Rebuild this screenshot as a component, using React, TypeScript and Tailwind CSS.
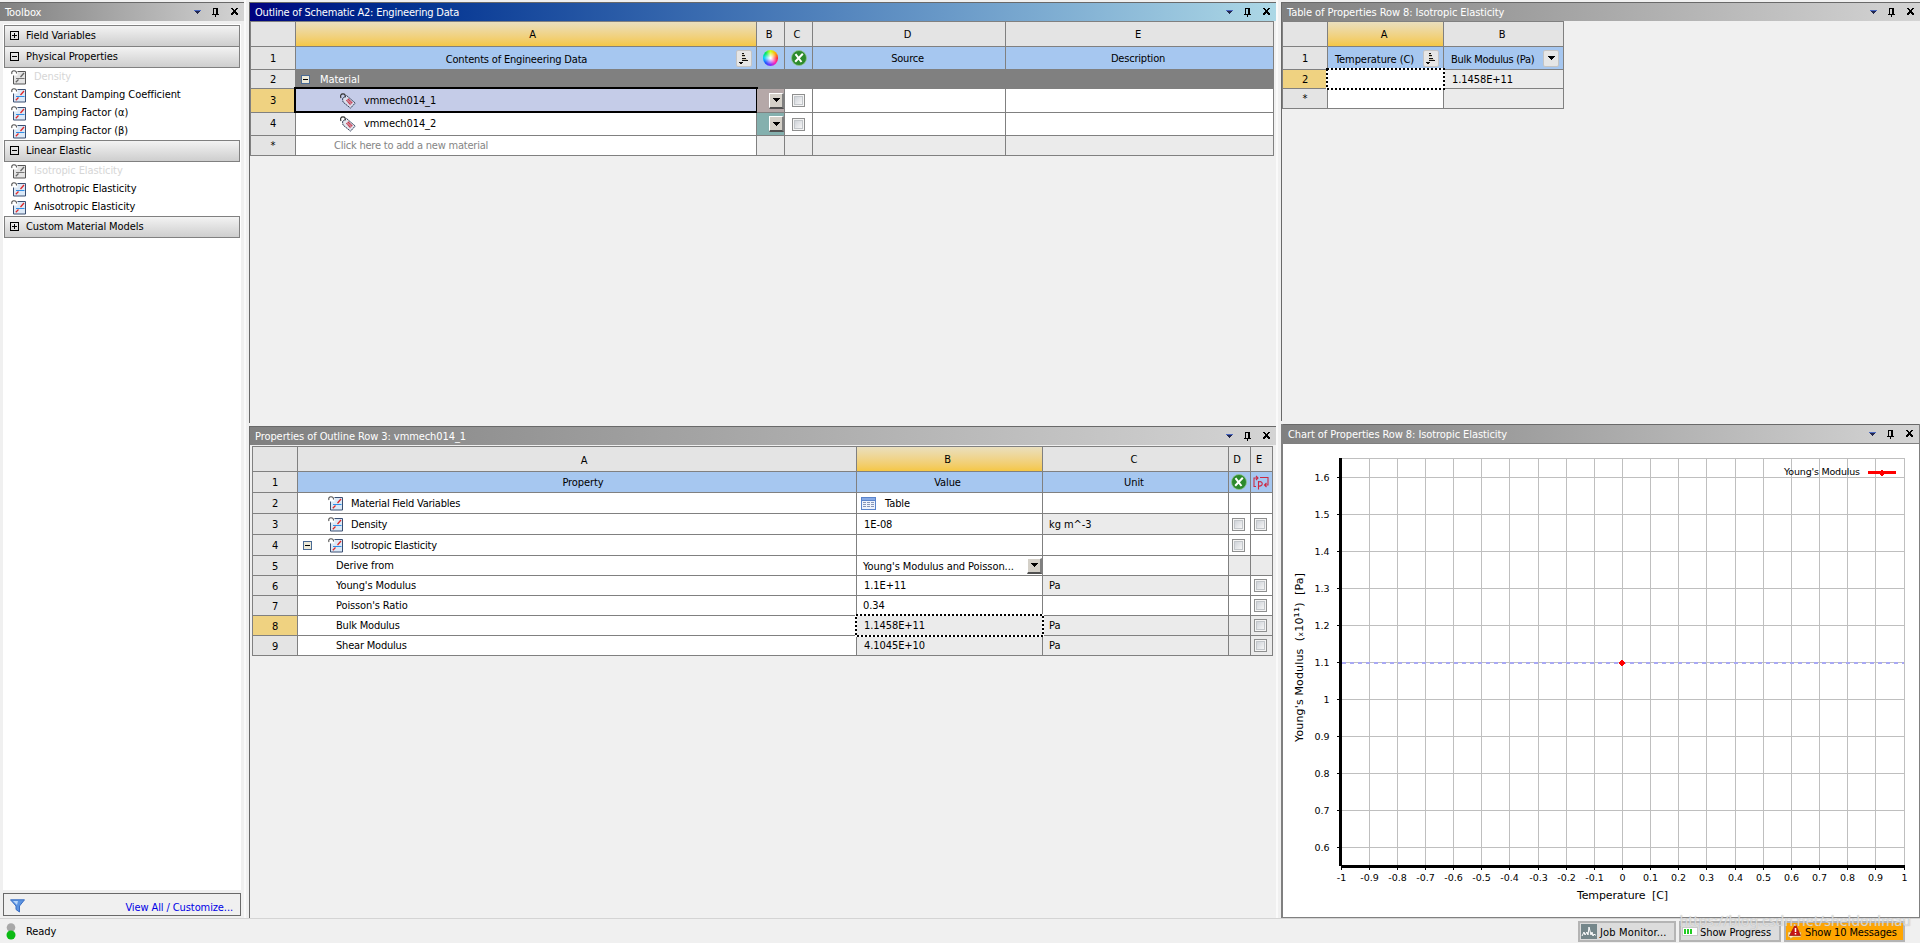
import type { ReactNode } from "react"
import clsx from "clsx"

const xTicks = [1341, 1369, 1397, 1425, 1453, 1481, 1509, 1538, 1566, 1594, 1622, 1650, 1678, 1706, 1735, 1763, 1791, 1819, 1847, 1875, 1904]
const xLabels = ["-1", "-0.9", "-0.8", "-0.7", "-0.6", "-0.5", "-0.4", "-0.3", "-0.2", "-0.1", "0", "0.1", "0.2", "0.3", "0.4", "0.5", "0.6", "0.7", "0.8", "0.9", "1"]
const yLabels = ["1.6", "1.5", "1.4", "1.3", "1.2", "1.1", "1", "0.9", "0.8", "0.7", "0.6"]

function TitleBar({ title, active, className }: { title: string; active?: boolean; className?: string }) {
  return (
    <div
      className={clsx(
        "flex h-[19px] shrink-0 items-center justify-between border-t border-[#696969] pl-[5px] text-white",
        active ? "bg-linear-to-r from-[#00007f] to-[#add8e6] tracking-[-0.2px]" : "bg-linear-to-r from-[#808080] to-[#d4d4d4] tracking-[-0.08px]",
        className,
      )}
    >
      <span className="pt-px">{title}</span>
      <svg className="h-[18px] w-[52px]" viewBox="0 0 52 18" shapeRendering="crispEdges">
        <path d="M2 7h7v1h-7z" fill="#4a68c0" />
        <path d="M3 8h5v1h-5zM4 9h3v1h-3zM5 10h1v1h-1z" fill="#23284f" />
        <path d="M21 5h5v6h1v1h-3v2h-1v-2h-3v-1h1zM22 6v5h2v-5z" fill="#000" fillRule="evenodd" />
        <path d="M39 5h2v1h1v1h1v-1h1v-1h2v1h-1v1h-1v2h1v1h1v2h-2v-1h-1v-1h-1v1h-1v1h-2v-2h1v-1h1v-2h-1v-1h-1z" fill="#000" />
      </svg>
    </div>
  )
}

function PropertyIcon({ disabled }: { disabled?: boolean }) {
  return (
    <svg className="h-[15px] w-[15px] shrink-0" viewBox="0 0 15 15">
      <path d="M6.500 1.500h8v12.500h-12V5.500h4z" fill={disabled ? "#e4e4e4" : "#dce9f7"} />
      <path d="M6.500 1.500h8v12.500h-12V5.500" fill="none" stroke={disabled ? "#555" : "#3a4f72"} />
      <path d="M1 4C.2 2 1.400.7 3 .7s2.600.8 2.500 2.800" fill="none" stroke="#555" strokeWidth="1.100" />
      <path d="M4.800 12.200L7.500 9.500M9.500 7l3.500-4" fill="none" stroke={disabled ? "#666" : "#e02828"} strokeWidth="1.300" />
      <path d="M5 8.500h8.500" stroke={disabled ? "#777" : "#2f8fe8"} />
    </svg>
  )
}

function ToggleIcon({ open }: { open?: boolean }) {
  return (
    <svg className="h-[9px] w-[9px] shrink-0" viewBox="0 0 9 9" shapeRendering="crispEdges">
      <path d="M.5.5h8v8h-8zM2 4.500h5" fill="none" stroke="#000" />
      {!open && <path d="M4.500 2v5" stroke="#000" />}
    </svg>
  )
}

function Collapse() {
  return (
    <svg className="h-[9px] w-[9px] shrink-0" viewBox="0 0 9 9" shapeRendering="crispEdges">
      <rect x=".5" y=".5" width="8" height="8" fill="#ece9d8" stroke="#4a6a94" />
      <path d="M2 4.500h5" stroke="#000" />
    </svg>
  )
}

function TagIcon() {
  return (
    <svg className="h-4 w-4 shrink-0" viewBox="0 0 16 16">
      <path d="M2.500 5.500L6.500 2.500L15.200 10L10.500 15.200L3 9z" fill="#dfe2ec" fillOpacity=".8" />
      <path d="M2.500 5.500L6.500 2.500L15.200 10L10.500 15.200L3 9z" fill="none" stroke="#34415a" strokeDasharray="2 .5" />
      <path d="M6 7.500l2.500-2.500 4.500 4.500-3 3z" fill="#c02840" fillOpacity=".55" />
      <path d="M6.500 7.500l4 4M8 6l4 4" stroke="#c81e32" strokeDasharray="1 1" />
      <path d="M1 5C0 2.500 1 .8 3 .8S5.500 2 5 4.500" fill="none" stroke="#333" strokeWidth="1.200" />
    </svg>
  )
}

function SortButton() {
  return (
    <span className="flex h-[17px] w-[16px] shrink-0 items-center justify-center rounded-[2px] border border-[#c4c4c4] bg-[#e6e6e6]">
      <svg className="h-[13px] w-[13px]" viewBox="0 0 13 13" shapeRendering="crispEdges">
        <path d="M4 1h2v1H4zM4 3h3v1H4zM4 6h4v1H4zM4 8h6v1H4zM1 10h4v1H1zM2 11h2v1H2z" fill="#111" />
        <path d="M4 2h2v1H4zM4 4h3v1H4zM4 7h5v1H4z" fill="#cdc4ae" />
      </svg>
    </span>
  )
}

function DropButton() {
  return (
    <span className="flex h-[16px] w-[15px] shrink-0 items-center justify-center border-t border-r-2 border-b-2 border-l border-t-white border-r-[#808080] border-b-[#505050] border-l-white bg-[#d4d0c8]">
      <svg className="h-[4px] w-[7px]" viewBox="0 0 7 4" shapeRendering="crispEdges">
        <path d="M0 0h7v1H0zM1 1h5v1H1zM2 2h3v1H2zM3 3h1v1H3z" />
      </svg>
    </span>
  )
}

function ExcelIcon() {
  return (
    <svg className="h-4 w-4 shrink-0" viewBox="0 0 16 16">
      <circle cx="8" cy="8" r="7.500" fill="#2c8a2c" stroke="#8fc48f" strokeWidth=".8" />
      <path d="M4.500 4.200L10.500 12M11.800 3.800L4.200 11.800" stroke="#fff" strokeWidth="2" />
    </svg>
  )
}

function ColorWheel() {
  return (
    <span className="h-4 w-[15px] shrink-0 rounded-full bg-[radial-gradient(circle,#fff_5%,transparent_60%),conic-gradient(#d0ff20,#ffb000,#ff3030,#ff20b0,#8030ff,#2050ff,#00d0ff,#00e860,#d0ff20)]" />
  )
}

function ParamIcon() {
  return (
    <svg className="h-[15px] w-4 shrink-0" viewBox="0 0 16 15" fill="none" stroke="#cc2a44" strokeWidth="1.100">
      <path d="M3 11.500H1V3h4M3 1l2 2-2 2M7 2.500h8V10h-3M13.500 8l-2 2 2 2M5.500 14.500V6M5.500 7c5-2 5 5 0 4" />
    </svg>
  )
}

function TableIcon() {
  return (
    <svg className="h-[13px] w-[15px] shrink-0" viewBox="0 0 15 13" shapeRendering="crispEdges">
      <path d="M0 0h15v13H0z" fill="#5a84cc" />
      <path d="M1 1h13v2H1z" fill="#86aae6" />
      <path d="M1 4h13v8H1z" fill="#eef3fc" />
      <path d="M2 5.500h3m1 0h3m1 0h3M2 7.500h3m1 0h3m1 0h3M2 9.500h3m1 0h3m1 0h3" stroke="#8796b8" />
    </svg>
  )
}

function Check() {
  return (
    <span className="flex h-[13px] w-[13px] shrink-0 items-center justify-center border border-[#8e8f8f] bg-[#f4f4f4]">
      <span className="h-[9px] w-[9px] border border-[#c2c6ca] bg-linear-to-br from-[#cfd3d9] to-[#f6f6f6]" />
    </span>
  )
}

function Cell({ className, children }: { className?: string; children?: ReactNode }) {
  return <div className={clsx("relative flex items-center border-r border-b border-[#808080] whitespace-pre", className)}>{children}</div>
}

const head = "justify-center bg-[#e4e4e4]"
const headTop = "justify-center bg-[#e4e4e4] pt-[2px] pr-[3px]"
const gold = "justify-center bg-linear-to-b from-[#eadfbd] to-[#f5c744] pt-[2px]"
const blue = "justify-center bg-[#a6c7f0]"
const picked = "justify-center bg-[#efd281]"
const white = "bg-white"
const gray = "bg-[#ebebeb]"

function Category({ label, open, className }: { label: string; open?: boolean; className?: string }) {
  return (
    <div className={clsx("flex h-[22px] shrink-0 items-center gap-[7px] border border-[#808080] bg-linear-to-b from-[#f3f3f3] to-[#cecece] pb-px pl-[5px]", className)}>
      <ToggleIcon open={open} />
      <span>{label}</span>
    </div>
  )
}

function Item({ label, disabled }: { label: string; disabled?: boolean }) {
  return (
    <div className={clsx("flex h-[18px] shrink-0 items-center gap-2 pl-[7px]", disabled && "text-[#d6d6d6]")}>
      <PropertyIcon disabled={disabled} />
      <span>{label}</span>
    </div>
  )
}

function Toolbox() {
  return (
    <div className="flex w-[244px] flex-col pt-[2px]">
      <TitleBar title="Toolbox" />
      <div className="mt-[3px] mr-[3px] ml-[3px] flex h-[866px] flex-col bg-white pt-px pr-px pl-px">
        <Category label="Field Variables" />
        <Category label="Physical Properties" open className="-mt-px" />
        <div className="flex flex-col">
          <Item label="Density" disabled />
          <Item label="Constant Damping Coefficient" />
          <Item label="Damping Factor (α)" />
          <Item label="Damping Factor (β)" />
        </div>
        <Category label="Linear Elastic" open />
        <div className="flex flex-col">
          <Item label="Isotropic Elasticity" disabled />
          <Item label="Orthotropic Elasticity" />
          <Item label="Anisotropic Elasticity" />
        </div>
        <Category label="Custom Material Models" />
      </div>
      <div className="mx-[3px] mt-[3px] flex h-[23px] items-center justify-between border border-[#696969] pr-[7px] pl-[6px] text-[#0000e6]">
        <svg className="mt-[2px] h-[14px] w-[15px]" viewBox="0 0 15 14">
          <path d="M.5.8h14L9.500 7v6L6 10.500V7z" fill="#5b93e0" stroke="#3a6ec4" />
          <path d="M3 2h5l-1 4z" fill="#b8d6fa" />
        </svg>
        <span className="pt-[6px] tracking-[-0.1px]">View All / Customize...</span>
      </div>
    </div>
  )
}

function OutlineTable() {
  return (
    <div className="grid w-[1024px] grid-cols-[45px_461px_28px_28px_193px_268px] grid-rows-[25px_23px_19px_24px_23px_20px] border-t border-l border-[#808080]">
      <Cell className={head} />
      <Cell className={clsx(gold, "pl-[13px]")}>A</Cell>
      <Cell className={headTop}>B</Cell>
      <Cell className={headTop}>C</Cell>
      <Cell className={headTop}>D</Cell>
      <Cell className={headTop}>E</Cell>

      <Cell className={clsx(head, "pt-[2px]")}>1</Cell>
      <Cell className={blue}>
        <span className="flex-1 pt-[3px] pl-px text-center tracking-[-0.18px]">Contents of Engineering Data</span>
        <span className="mr-1">
          <SortButton />
        </span>
      </Cell>
      <Cell className={blue}><ColorWheel /></Cell>
      <Cell className={blue}><ExcelIcon /></Cell>
      <Cell className={clsx(blue, "pt-px pr-[3px] tracking-[-0.25px]")}>Source</Cell>
      <Cell className={clsx(blue, "pt-px pr-[3px] tracking-[-0.2px]")}>Description</Cell>

      <Cell className={clsx(head, "pt-[2px]")}>2</Cell>
      <Cell className="col-span-5 gap-[10px] bg-[#808080] pt-px pl-[5px] text-white">
        <Collapse />
        <span>Material</span>
      </Cell>

      <Cell className={picked}>3</Cell>
      <Cell className="gap-2 bg-[#c5cce8] pl-11">
        <span className="absolute -top-[2px] -right-[2px] -bottom-[1px] -left-[2px] border-2 border-black" />
        <TagIcon />
        <span>vmmech014_1</span>
      </Cell>
      <Cell className="justify-end bg-[#b5a8a8]"><DropButton /></Cell>
      <Cell className="justify-center bg-white"><Check /></Cell>
      <Cell className={white} />
      <Cell className={white} />

      <Cell className={head}>4</Cell>
      <Cell className="gap-2 bg-white pl-11">
        <TagIcon />
        <span>vmmech014_2</span>
      </Cell>
      <Cell className="justify-end bg-[#84b0ae]"><DropButton /></Cell>
      <Cell className="justify-center bg-white"><Check /></Cell>
      <Cell className={white} />
      <Cell className={white} />

      <Cell className={head}>*</Cell>
      <Cell className="bg-white pl-[38px] tracking-[-0.22px] text-[#858585]">Click here to add a new material</Cell>
      <Cell className={gray} />
      <Cell className={gray} />
      <Cell className={gray} />
      <Cell className={gray} />
    </div>
  )
}

function Dotted() {
  return (
    <svg className="absolute -top-[2px] -left-[2px] h-[calc(100%+4px)] w-[calc(100%+4px)]" shapeRendering="crispEdges">
      <rect x="1" y="1" width="calc(100% - 2px)" height="calc(100% - 2px)" fill="none" stroke="#fff" strokeWidth="2" />
      <rect x="1" y="1" width="calc(100% - 2px)" height="calc(100% - 2px)" fill="none" stroke="#000" strokeWidth="2" strokeDasharray="2 2" />
    </svg>
  )
}

function PropertiesTable() {
  return (
    <div className="mt-px ml-[2px] grid w-[1021px] grid-cols-[45px_559px_186px_186px_22px_22px] grid-rows-[25px_repeat(4,21px)_repeat(5,20px)] border-t border-l border-[#808080]">
      <Cell className={head} />
      <Cell className="justify-center bg-[#e4e4e4] pt-[3px] pl-[14px]">A</Cell>
      <Cell className={clsx(gold, "pr-1")}>B</Cell>
      <Cell className={headTop}>C</Cell>
      <Cell className="justify-center bg-[#e4e4e4] pt-[2px] pr-[5px]">D</Cell>
      <Cell className="justify-center bg-[#e4e4e4] pt-[2px] pr-[5px]">E</Cell>

      <Cell className={clsx(head, "pt-[2px]")}>1</Cell>
      <Cell className={clsx(blue, "pt-px pl-[12px]")}>Property</Cell>
      <Cell className={clsx(blue, "pt-px pr-1")}>Value</Cell>
      <Cell className={clsx(blue, "pt-px pr-[3px]")}>Unit</Cell>
      <Cell className={clsx(blue, "pr-[2px]")}><ExcelIcon /></Cell>
      <Cell className={clsx(blue, "pr-[2px]")}><ParamIcon /></Cell>

      <Cell className={clsx(head, "pt-[2px]")}>2</Cell>
      <Cell className="gap-2 bg-white pt-px pl-[30px] tracking-[-0.22px]"><PropertyIcon />Material Field Variables</Cell>
      <Cell className="gap-[9px] bg-white pt-px pl-1"><TableIcon />Table</Cell>
      <Cell className={white} />
      <Cell className={white} />
      <Cell className={white} />

      <Cell className={clsx(head, "pt-[2px]")}>3</Cell>
      <Cell className="gap-2 bg-white pt-px pl-[30px] tracking-[-0.2px]"><PropertyIcon />Density</Cell>
      <Cell className="bg-white pt-px pl-[7px]">1E-08</Cell>
      <Cell className="bg-[#ebebeb] pt-px pl-[6px]">kg m^-3</Cell>
      <Cell className="bg-white pl-[3px]"><Check /></Cell>
      <Cell className="bg-white pl-[3px]"><Check /></Cell>

      <Cell className={clsx(head, "pt-[2px]")}>4</Cell>
      <Cell className="bg-white pt-px pl-[5px] tracking-[-0.22px]">
        <Collapse />
        <span className="mr-2 ml-4"><PropertyIcon /></span>
        Isotropic Elasticity
      </Cell>
      <Cell className={white} />
      <Cell className={white} />
      <Cell className="bg-white pl-[3px]"><Check /></Cell>
      <Cell className={white} />

      <Cell className={clsx(head, "pt-[2px]")}>5</Cell>
      <Cell className="bg-white pl-[38px]">Derive from</Cell>
      <Cell className="justify-between bg-white pl-[6px]">
        <span className="pt-[2px] tracking-[-0.08px]">Young's Modulus and Poisson...</span>
        <DropButton />
      </Cell>
      <Cell className={white} />
      <Cell className={gray} />
      <Cell className={gray} />

      <Cell className={clsx(head, "pt-[2px]")}>6</Cell>
      <Cell className="bg-white pl-[38px] tracking-[-0.12px]">Young's Modulus</Cell>
      <Cell className="bg-white pl-[7px]">1.1E+11</Cell>
      <Cell className="bg-[#ebebeb] pl-[6px]">Pa</Cell>
      <Cell className={white} />
      <Cell className="bg-white pb-px pl-[3px]"><Check /></Cell>

      <Cell className={clsx(head, "pt-[2px]")}>7</Cell>
      <Cell className="bg-white pl-[38px] tracking-[-0.12px]">Poisson's Ratio</Cell>
      <Cell className="bg-white pl-[6px]">0.34</Cell>
      <Cell className={white} />
      <Cell className={white} />
      <Cell className="bg-white pb-px pl-[3px]"><Check /></Cell>

      <Cell className={clsx(picked, "pt-[2px]")}>8</Cell>
      <Cell className="bg-white pl-[38px] tracking-[-0.2px]">Bulk Modulus</Cell>
      <Cell className="z-10 bg-[#ebebeb] pl-[7px]"><Dotted />1.1458E+11</Cell>
      <Cell className="bg-[#ebebeb] pl-[6px]">Pa</Cell>
      <Cell className={gray} />
      <Cell className="bg-[#ebebeb] pb-px pl-[3px]"><Check /></Cell>

      <Cell className={clsx(head, "pt-[2px]")}>9</Cell>
      <Cell className="bg-white pl-[38px] tracking-[-0.2px]">Shear Modulus</Cell>
      <Cell className="bg-[#ebebeb] pl-[7px]">4.1045E+10</Cell>
      <Cell className="bg-[#ebebeb] pl-[6px]">Pa</Cell>
      <Cell className={gray} />
      <Cell className="bg-[#ebebeb] pb-px pl-[3px]"><Check /></Cell>
    </div>
  )
}

function DataTable() {
  return (
    <div className="grid w-[282px] grid-cols-[45px_116px_120px] grid-rows-[25px_23px_19px_20px] border-t border-l border-[#808080]">
      <Cell className={head} />
      <Cell className={clsx(gold, "pr-[3px]")}>A</Cell>
      <Cell className={headTop}>B</Cell>
      <Cell className={clsx(head, "pt-[2px]")}>1</Cell>
      <Cell className="justify-between bg-[#a6c7f0] pr-1 pl-[7px]"><span className="pt-[3px]">Temperature (C)</span><SortButton /></Cell>
      <Cell className="justify-between bg-[#a6c7f0] pr-1 pl-[7px]">
        <span className="pt-[3px] tracking-[-0.3px]">Bulk Modulus (Pa)</span>
        <span className="flex h-[17px] w-[16px] items-center justify-center rounded-[2px] border border-[#c4c4c4] bg-[#e6e6e6]">
          <svg className="h-[4px] w-[7px]" viewBox="0 0 7 4" shapeRendering="crispEdges">
            <path d="M0 0h7v1H0zM1 1h5v1H1zM2 2h3v1H2zM3 3h1v1H3z" />
          </svg>
        </span>
      </Cell>
      <Cell className={clsx(picked, "pt-[2px]")}>2</Cell>
      <Cell className="z-10 bg-white"><Dotted /></Cell>
      <Cell className="bg-[#ebebeb] pt-px pl-2">1.1458E+11</Cell>
      <Cell className={head}>*</Cell>
      <Cell className={white} />
      <Cell className={gray} />
    </div>
  )
}

function Chart() {
  return (
    <svg className="block h-[473px] w-[636px] bg-white font-['DejaVu_Sans'] text-[9.5px] tracking-normal" viewBox="1283 444 636 473">
      <g shapeRendering="crispEdges">
        {xTicks.map((x) => (
          <rect key={x} x={x} y="458" width="1" height="412" fill="#bfbfbf" />
        ))}
        <rect x="1341" y="458" width="564" height="1" fill="#bfbfbf" />
        {yLabels.map((label, i) => (
          <rect key={label} x="1341" y={477 + i * 37} width="564" height="1" fill="#bfbfbf" />
        ))}
        <path d="M1342 663H1904" stroke="#a8a8f4" strokeWidth="2" strokeDasharray="4 4" />
        <rect x="1339" y="458" width="3" height="408" />
        <rect x="1341" y="865" width="564" height="3" />
        {xTicks.map((x) => (
          <rect key={x} x={x} y="868" width="1" height="2" />
        ))}
        {yLabels.map((label, i) => (
          <rect key={label} x="1337" y={477 + i * 37} width="2" height="1" />
        ))}
        <path d="M1868 471h28v3h-28z" fill="#f00" />
        <path d="M1881 470h2v1h1v4h-1v1h-2v-1h-1v-4h1z" fill="#f00" />
        <path d="M1621 660h2v1h1v1h1v2h-1v1h-1v1h-2v-1h-1v-1h-1v-2h1v-1h1z" fill="#f00" />
      </g>
      {xTicks.map((x, i) => (
        <text key={x} x={x + 0.5} y="881" textAnchor="middle">{xLabels[i]}</text>
      ))}
      {yLabels.map((label, i) => (
        <text key={label} x="1329.500" y={481 + i * 37} textAnchor="end">{label}</text>
      ))}
      <text x="1784" y="475" textLength="76">Young's Modulus</text>
      <text x="1577" y="899" textLength="91" fontSize="11" className="whitespace-pre">Temperature  [C]</text>
      <text transform="translate(1303 742) rotate(-90)" textLength="169" fontSize="11" className="whitespace-pre">
        {"Young's Modulus  (ₓ10"}
        <tspan fontSize="13">¹¹</tspan>
        {")  [Pa]"}
      </text>
    </svg>
  )
}

function StatusButton({ className, children }: { className?: string; children: ReactNode }) {
  return <div className={clsx("flex h-[21px] items-center border-2 border-[#b4b4b4] pl-[1px]", className)}>{children}</div>
}

function StatusBar() {
  return (
    <div className="relative flex h-[25px] items-start justify-between border-t border-[#d4d4d4] pr-[15px] pl-[6px]">
      <div className="flex gap-[10px] pt-1">
        <svg className="h-[17px] w-[10px]" viewBox="0 0 10 17">
          <circle cx="5" cy="4.500" r="4.300" fill="#a8a8a8" />
          <circle cx="5" cy="12" r="4.500" fill="#0cba14" />
        </svg>
        <span className="pt-[2px]">Ready</span>
      </div>
      <div className="flex gap-[3px] pt-[2px]">
        <StatusButton className="w-[98px] gap-[3px] bg-[#dcdcdc]">
          <svg className="h-[15px] w-4 shrink-0" viewBox="0 0 16 15">
            <path d="M0 0h16v15H0z" fill="#74868a" />
            <path d="M1 12l2-4 1 3 2-3 1 3 1-8 2 8 1-3 1 4 1-2 1 1h1" fill="none" stroke="#fff" />
          </svg>
          <span className="pt-[2px] tracking-[0.15px]">Job Monitor...</span>
        </StatusButton>
        <StatusButton className="w-[102px] gap-[2px] bg-[#dcdcdc]">
          <svg className="h-[9px] w-4 shrink-0" viewBox="0 0 16 9" shapeRendering="crispEdges">
            <path d="M.5.5h15v8H.5z" fill="#fff" stroke="#c8c8c8" />
            <path d="M2 2h2v5H2zM5 2h2v5H5zM8 2h2v5H8z" fill="#22cc22" />
          </svg>
          <span className="pt-[2px]">Show Progress</span>
        </StatusButton>
        <StatusButton className="w-[121px] gap-[3px] bg-[#ffa500]">
          <svg className="h-[15px] w-[15px] shrink-0" viewBox="0 0 15 15">
            <path d="M1 8h13v5H6l-3 2v-2H1z" fill="#fff4c8" stroke="#d0a040" strokeWidth=".7" />
            <path d="M8.500.5l5 11h-11z" fill="#c81414" stroke="#8c1010" strokeWidth=".7" />
            <path d="M8.500 4v4M8.500 9v1.500" stroke="#fff" strokeWidth="1.500" />
          </svg>
          <span className="pt-[2px] tracking-[-0.15px]">Show 10 Messages</span>
        </StatusButton>
      </div>
      <span className="absolute -top-[8px] right-[9px] font-['Noto_Sans'] text-[14.2px] leading-5 tracking-normal text-white/60 [text-shadow:0_0_1px_#a0a0a0]">
        https://blog.csdn.net/sheldonlmau
      </span>
    </div>
  )
}

export default function App() {
  return (
    <div className="flex h-[943px] w-[1920px] flex-col overflow-hidden bg-[#f0f0f0] font-['DejaVu_Sans_Condensed','DejaVu_Sans',sans-serif] text-[11px] leading-[14px] tracking-[-0.08px] text-black">
      <div className="flex h-[918px] shrink-0">
        <Toolbox />
        <div className="mr-[3px] w-[2px] bg-[#fafafa]" />
        <div className="flex w-[1027px] flex-col pt-[2px]">
          <div className="h-[421px] border-l border-[#696969]">
            <TitleBar title="Outline of Schematic A2: Engineering Data" active />
            <OutlineTable />
          </div>
          <div className="mt-[3px] flex-1 border-l border-[#696969]">
            <TitleBar title="Properties of Outline Row 3: vmmech014_1" />
            <PropertiesTable />
          </div>
        </div>
        <div className="mr-[3px] w-[2px] bg-[#fafafa]" />
        <div className="flex flex-1 flex-col pt-[2px]">
          <div className="h-[419px] border-l border-[#696969]">
            <TitleBar title="Table of Properties Row 8: Isotropic Elasticity" className="tracking-[-0.03px]" />
            <DataTable />
          </div>
          <div className="mt-[3px] h-[494px] border-r border-b border-l-2 border-[#808080]">
            <TitleBar title="Chart of Properties Row 8: Isotropic Elasticity" />
            <div className="h-px bg-[#808080]" />
            <Chart />
          </div>
        </div>
      </div>
      <StatusBar />
    </div>
  )
}
